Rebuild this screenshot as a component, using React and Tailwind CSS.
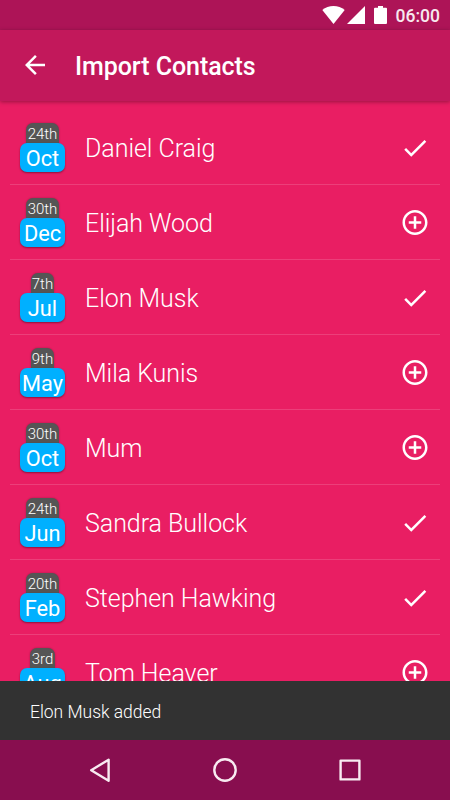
import React from 'react';

const contacts = [
    { day: '24th', month: 'Oct', name: 'Daniel Craig', added: true },
    { day: '30th', month: 'Dec', name: 'Elijah Wood', added: false },
    { day: '7th', month: 'Jul', name: 'Elon Musk', added: true },
    { day: '9th', month: 'May', name: 'Mila Kunis', added: false },
    { day: '30th', month: 'Oct', name: 'Mum', added: false },
    { day: '24th', month: 'Jun', name: 'Sandra Bullock', added: true },
    { day: '20th', month: 'Feb', name: 'Stephen Hawking', added: true },
    { day: '3rd', month: 'Aug', name: 'Tom Heaver', added: false },
];

export default function App() {
    return (
        <div className="flex flex-col w-[450px] h-[800px] overflow-hidden bg-[#e91e63] text-white font-['Roboto',sans-serif]">
            <StatusBar />
            <Toolbar />
            <ul className="flex-1 min-h-0 overflow-hidden px-2.5 pt-[9px]">
                {contacts.map((contact) => (
                    <ContactRow key={contact.name} {...contact} />
                ))}
            </ul>
            <div className="h-[59px] shrink-0 flex items-center px-[30px] pt-1 bg-[#323232] text-[17.5px] tracking-[-0.03px] font-light">
                Elon Musk added
            </div>
            <NavBar />
        </div>
    );
}

function StatusBar() {
    return (
        <div className="h-[30px] shrink-0 flex items-center justify-end pr-2.5 bg-[#ad1457]">
            <svg className="w-[23px] h-[18px]" viewBox="0 0 23 18" fill="currentColor">
                <path d="M11.5 18L0.3 3.9C3.4 1.4 7.3 0 11.5 0s8.1 1.4 11.2 3.9z" />
            </svg>
            <svg className="w-[18px] h-[18px] ml-[2px]" viewBox="0 0 18 18" fill="currentColor">
                <path d="M0 18L18 0V18z" />
            </svg>
            <svg className="w-[13px] h-[18px] ml-[9.5px]" viewBox="0 0 13 18" fill="currentColor">
                <path d="M4 0h5v1.8h3a1 1 0 0 1 1 1V17a1 1 0 0 1-1 1H1a1 1 0 0 1-1-1V2.8a1 1 0 0 1 1-1h3z" />
            </svg>
            <span className="ml-[8.5px] pt-[3px] text-[17.5px] leading-none font-medium text-[#f7e8ee]">06:00</span>
        </div>
    );
}

function Toolbar() {
    return (
        <header className="relative h-[71px] shrink-0 flex items-center pl-5 pb-px bg-[#c2185b] shadow-[0_1px_4px_rgba(0,0,0,0.35)]">
            <svg className="w-[30px] h-[30px]" viewBox="0 0 24 24" fill="currentColor">
                <path d="M20 11H7.83l5.59-5.59L12 4l-8 8 8 8 1.41-1.41L7.83 13H20v-2z" />
            </svg>
            <h1 className="ml-[25px] pt-[3px] text-[25px] leading-none font-medium tracking-[-0.06px]">Import Contacts</h1>
        </header>
    );
}

function ContactRow({ day, month, name, added }) {
    return (
        <li className="h-[75px] flex items-center pl-2.5 pr-2.5 border-b border-white/15">
            <DateBadge day={day} month={month} />
            <span className="flex-1 ml-5 pt-[3px] text-[25px] leading-none font-light tracking-[-0.04px]">{name}</span>
            {added ? <CheckIcon /> : <AddIcon />}
        </li>
    );
}

function DateBadge({ day, month }) {
    return (
        <div className="w-[45px] flex flex-col items-center">
            <div className="h-5 px-[1.25px] pt-[3px] rounded-t-[7px] bg-[#555] text-[15px] leading-[17px] font-light shadow-[0_0_2px_rgba(0,0,0,0.3)]">
                {day}
            </div>
            <div className="relative w-full h-[29px] pt-[2px] rounded-[7px] bg-[#00b0ff] text-center text-[21.75px] leading-[28px] shadow-[0_1px_2px_rgba(0,0,0,0.4)]">
                {month}
            </div>
        </div>
    );
}

function CheckIcon() {
    return (
        <svg className="w-[30px] h-[30px] mt-px" viewBox="0 0 24 24" fill="currentColor">
            <path d="M9 16.17L4.83 12l-1.42 1.41L9 19 21 7l-1.41-1.41z" />
        </svg>
    );
}

function AddIcon() {
    return (
        <svg className="w-[30px] h-[30px]" viewBox="0 -0.3 24 24" fill="currentColor">
            <path d="M13 7h-2v4H7v2h4v4h2v-4h4v-2h-4V7zm-1-5C6.48 2 2 6.48 2 12s4.48 10 10 10 10-4.48 10-10S17.52 2 12 2zm0 18c-4.41 0-8-3.59-8-8s3.59-8 8-8 8 3.59 8 8-3.59 8-8 8z" />
        </svg>
    );
}

function NavBar() {
    return (
        <nav className="h-[60px] shrink-0 flex items-center justify-center gap-[95px] bg-[#880e4f] text-[#f8ebf1]">
            <svg className="w-[30px] h-[30px]" viewBox="0 0 30 30" fill="none" stroke="currentColor" strokeWidth="2.4" strokeLinejoin="round">
                <path d="M6.2 15.2L23.6 4.7v21z" />
            </svg>
            <svg className="w-[30px] h-[30px]" viewBox="0 0 30 30" fill="none" stroke="currentColor" strokeWidth="2.4">
                <circle cx="15" cy="15" r="10.7" />
            </svg>
            <svg className="w-[30px] h-[30px]" viewBox="0 0 30 30" fill="none" stroke="currentColor" strokeWidth="2.4" strokeLinejoin="round">
                <rect x="5.6" y="5.6" width="18.8" height="18.8" />
            </svg>
        </nav>
    );
}
